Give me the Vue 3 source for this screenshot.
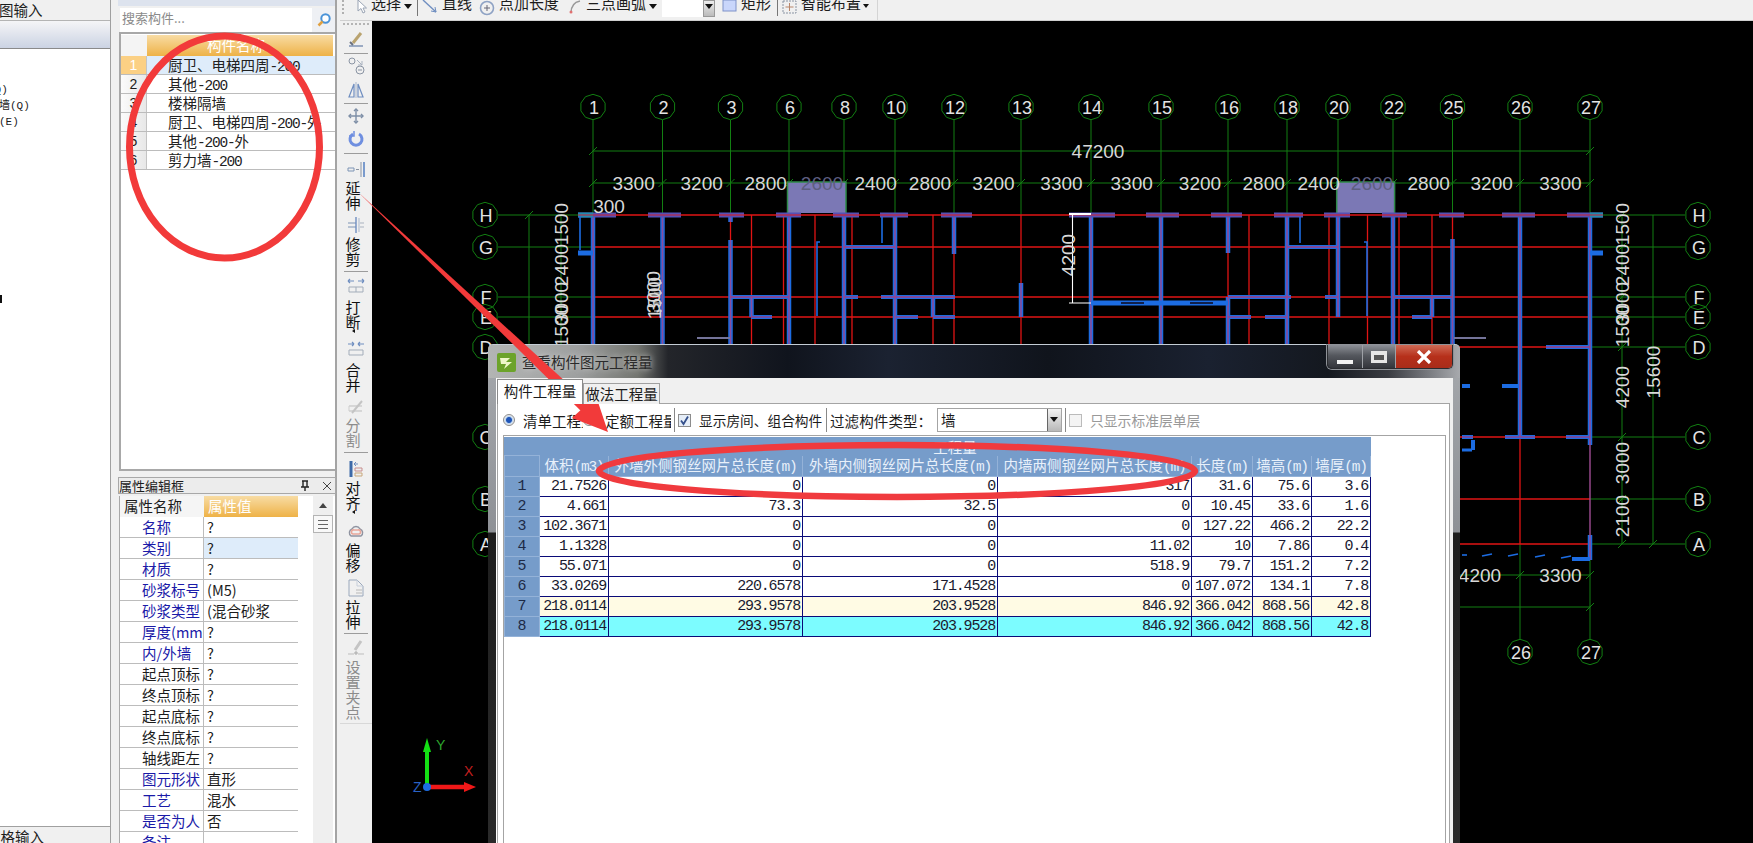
<script setup>
const navLines = [
  { t: '(Q)', cls: 'nl1' },
  { t: '砼墙(Q)', cls: 'nl2' },
  { t: '梁(E)', cls: 'nl3' }
]
const listRows = [
  ['厨卫、电梯四周', '-200'],
  ['其他', '-200'],
  ['楼梯隔墙', ''],
  ['厨卫、电梯四周', '-200-外'],
  ['其他', '-200-外'],
  ['剪力墙', '-200']
]
const props = [
  ['名称', '?', 1], ['类别', '?', 1, 1], ['材质', '?', 1], ['砂浆标号', '(M5)', 1], ['砂浆类型', '(混合砂浆', 1],
  ['厚度(mm', '?', 1], ['内/外墙', '?', 1], ['起点顶标', '?'], ['终点顶标', '?'], ['起点底标', '?'], ['终点底标', '?'],
  ['轴线距左', '?'], ['图元形状', '直形', 1], ['工艺', '混水', 1], ['是否为人', '否', 1], ['备注', '', 1]
]

const ic = {
  brush: [['M7 14 15 4', '#b9a36f', 3], ['M3 17H17', '#7f93b5', 1.5], ['M4 13l3 3', '#68707f', 2]],
  pair: [['M3 5a3 3 0 1 0 6 0a3 3 0 1 0-6 0', '#8a94a3', 1], ['M10 14a4 4 0 1 0 8 0a4 4 0 1 0-8 0', '#8a94a3', 1], ['M11 4l5 5M16 5v4h-4', '#a9b2bf', 1], ['M12 14h4', '#8a94a3', 1]],
  mirror: [['M8 17V4L3 17Z', '#6f8ec0', 1.2], ['M12 17V4L17 17Z', '#6f8ec0', 1.2], ['M10 2V18', '#a9b7cc', 1]],
  move: [['M10 3V17M3 10H17', '#7d8ea6', 1.4], ['M8 5l2-2 2 2M8 15l2 2 2-2M5 8l-2 2 2 2M15 8l2 2-2 2', '#7d8ea6', 1.4]],
  rotate: [['M7 5a6 6 0 1 0 6 0', '#6f8fe0', 3], ['M8 2v5H3', '#6f8fe0', 1.5]],
  extend: [['M2 9H8M2 12H8M2 9V12M8 9V12', '#7d94b5', 1], ['M10 10.5H13', '#8a94a3', 1], ['M15 3V18', '#8a94a3', 1], ['M18 3V18', '#5d86c4', 1.6]],
  trim: [['M2 8H10M2 12H10', '#7d94b5', 1], ['M10 2V18', '#6f8ec0', 1.4], ['M13 3V17', '#a9b7cc', 1], ['M14 8H18M14 12H18', '#a9b2bf', 1]],
  breakI: [['M2 5H8M2 5l2-2M2 5l2 2M18 5h-6M18 5l-2-2M18 5l-2 2', '#6f8ec0', 1.2], ['M3 11H17M3 16H17M3 11V16M17 11V16M10 11V16', '#a3adba', 1]],
  merge: [['M8 5H2M8 5L6 3M8 5L6 7M12 5h6M12 5l2-2M12 5l2 2', '#6f8ec0', 1.2], ['M3 11H17M3 16H17M3 11V16M17 11V16', '#a3adba', 1]],
  split: [['M3 15H16M3 10H16', '#bdbdbd', 1], ['M6 17 16 5', '#c4c4c4', 2], ['M3 10V15', '#cfcfcf', 1]],
  align: [['M5 2V18', '#3e6aa8', 3], ['M8 5H12M8 5l2-2M8 5l2 2', '#6f8ec0', 1], ['M9 9H16V12H9Z', '#c78d8d', 1], ['M9 14H16V17H9Z', '#c9a77a', 1]],
  offset: [['M5 15a4 4 0 0 1 1-7a4.500 4.500 0 0 1 8 0a4 4 0 0 1 1 7Z', '#8f93a0', 1.4], ['M7 13a2 2 0 0 1 1-4h4a2 2 0 0 1 1 4Z', '#e8a79a', 1.6]],
  stretch: [['M3 2H11L17 8V18H3Z', '#9aa8bc', 1], ['M11 2V8H17', '#c7cfdb', 1], ['M10 12H16M10 15H16', '#b8b8b8', 1]],
  grip: [['M9 12 15 3', '#c4c4c4', 3], ['M2 16H8M12 16H18', '#bdbdbd', 1], ['M9 14h2v2H9Z', '#a8a8a8', 1]]
}
const vbar = [
  { k: 'brush', mt: 3 }, { sep: 1, mt: 4 }, { k: 'pair', mt: 2 }, { k: 'mirror', mt: 4 }, { sep: 1, mt: 3 },
  { k: 'move', mt: 2 }, { k: 'rotate', mt: 3 }, { sep: 1, mt: 4 },
  { k: 'extend', mt: 5, label: '延伸', tmt: 1 }, { k: 'trim', mt: 5, label: '修剪', tmt: 1 }, { sep: 1, mt: 5 },
  { k: 'breakI', mt: 4, label: '打断', tmt: 3, more: 1 }, { k: 'merge', mt: 6, label: '合并', tmt: 3 },
  { k: 'split', mt: 4, label: '分割', tmt: 1, off: 1 }, { sep: 1, mt: 5 },
  { k: 'align', mt: 6, label: '对齐', tmt: 1, more: 1 }, { k: 'offset', mt: 7, label: '偏移', tmt: 1 },
  { k: 'stretch', mt: 6, label: '拉伸', tmt: 1 }, { sep: 1, mt: 4 },
  { k: 'grip', mt: 4, label: '设置夹点', tmt: 1, off: 1 }
]

const tableHead = [['体积', '(m3)'], ['外墙外侧钢丝网片总长度', '(m)'], ['外墙内侧钢丝网片总长度', '(m)'], ['内墙两侧钢丝网片总长度', '(m)'], ['长度', '(m)'], ['墙高', '(m)'], ['墙厚', '(m)']]
const colW = [35, 69, 194, 195, 194, 61, 59, 59]
const tableRows = [
  ['21.7526', '0', '0', '317', '31.6', '75.6', '3.6'],
  ['4.661', '73.3', '32.5', '0', '10.45', '33.6', '1.6'],
  ['102.3671', '0', '0', '0', '127.22', '466.2', '22.2'],
  ['1.1328', '0', '0', '11.02', '10', '7.86', '0.4'],
  ['55.071', '0', '0', '518.9', '79.7', '151.2', '7.2'],
  ['33.0269', '220.6578', '171.4528', '0', '107.072', '134.1', '7.8'],
  ['218.0114', '293.9578', '203.9528', '846.92', '366.042', '868.56', '42.8'],
  ['218.0114', '293.9578', '203.9528', '846.92', '366.042', '868.56', '42.8']
]

const axes = [['1', 593], ['2', 662.5], ['3', 730.5], ['6', 789], ['8', 844], ['10', 895], ['12', 954], ['13', 1021], ['14', 1091], ['15', 1161], ['16', 1228], ['18', 1287], ['20', 1338], ['22', 1393], ['25', 1452.5], ['26', 1520], ['27', 1590]]
const hAxes = [['H', 215], ['G', 247], ['F', 297], ['E', 317], ['D', 347], ['C', 437], ['B', 499], ['A', 544]]
const poly = (cx, cy, r = 12.7) => Array.from({ length: 10 }, (_, i) => {
  const a = Math.PI * 2 * i / 10 + Math.PI / 2
  return `${(cx + r * Math.cos(a)).toFixed(1)},${(cy + r * Math.sin(a)).toFixed(1)}`
}).join(' ')
const circles = [
  ...axes.map(([t, x]) => ({ t, x, y: 107, key: 't' + t })),
  ...hAxes.map(([t, y]) => ({ t, x: 485, y, key: 'l' + t })),
  ...hAxes.map(([t, y]) => ({ t, x: 1698, y, key: 'r' + t })),
  { t: '26', x: 1520, y: 652, key: 'b26' }, { t: '27', x: 1590, y: 652, key: 'b27' }
]
const dimsTop = [['3300', 633.6], ['3200', 701.7], ['2800', 765.7], ['2400', 875.6], ['2800', 930], ['3200', 993.5], ['3300', 1061.5], ['3300', 1131.7], ['3200', 1200], ['2800', 1263.7], ['2400', 1318.7], ['2800', 1428.7], ['3200', 1491.7], ['3300', 1560.4]]
const dimsV = [
  ['1500', 561, 224], ['2400', 561, 265], ['1500', 561, 326], ['3000', 561, 303],
  ['1500', 1622, 224], ['2400', 1622, 265], ['1500', 1622, 326], ['3000', 1622, 303], ['4200', 1622, 387], ['3000', 1622, 463], ['2100', 1622, 516],
  ['15600', 1653, 372], ['4200', 1068, 255], ['1500', 654, 298], ['3000', 653, 292]
]
const ticks = []
axes.forEach(([, x]) => ticks.push([x, 183]))
;[[593, 151], [1590, 151], [529, 215], [1520, 575], [1590, 575], [1590, 607], [1653, 544]].forEach(p => ticks.push(p))
hAxes.forEach(([, y]) => ticks.push([1622, y]))
const redV = [751.5, 783.5, 815, 852, 933, 954, 1021, 1228, 1249, 1329, 1367.5, 1399, 1432, 730.5, 1452.5]
const redH = [215, 247, 297, 317]
const redLow = [347, 437, 499, 544]
const vWalls = [[593, 215, 344], [662.5, 215, 344], [730.5, 240, 344], [730.5, 215, 222], [789, 215, 344], [844, 215, 344], [895, 215, 344], [954, 215, 254], [1021, 283, 317], [1091, 215, 344], [1161, 215, 344], [1228, 215, 253], [1228, 297, 344], [1287, 215, 344], [1338, 215, 317], [1393, 215, 344], [1452.5, 239, 344], [1520, 215, 437], [1590, 215, 445], [1590, 535, 560], [751.5, 297, 317], [933, 297, 317], [1432, 297, 317]]
const hWalls = [[844, 895, 247], [1287, 1338, 247], [730, 789, 297], [844, 858, 297], [881, 955, 297], [1228, 1291, 297], [1325, 1338, 297], [1393, 1452, 297], [751, 772, 317], [896, 918, 317], [933, 955, 317], [1228, 1251, 317], [1265, 1287, 317], [1412, 1432, 317], [1462, 1473, 437], [1505, 1535, 437], [1566, 1590, 437], [1546, 1590, 347]]
const stubs = [[578, 616], [648, 681], [719, 744], [776, 801], [833, 859], [880, 908], [941, 972], [1069, 1115], [1146, 1179], [1211, 1242], [1274, 1303], [1324, 1350], [1382, 1407], [1439, 1464], [1502, 1535], [1567, 1603]]
const thinBlue = ['M580 216V250', 'M817 316V242H820', 'M882 217V243', 'M1300 217V243', 'M1367 316V242H1364', 'M1462 555h5', 'M1482 556l10-2', 'M1508 556l10-2', 'M1535 557l10-2', 'M1561 558l10-2']
const thickBlue = [[578, 593, 253, 5], [1590, 1603, 253, 5], [1462, 1470, 386, 4], [1502, 1518, 386, 4], [1091, 1228, 303, 5], [1572, 1590, 559, 4], [1462, 1472, 450, 3]]
</script>

<template>
  <div class="app">
    <aside class="nav">
      <div class="nav-tab">图输入</div>
      <div class="nav-head"></div>
      <div class="nav-body">
        <div v-for="l in navLines" :key="l.t" :class="['nav-line', l.cls]">{{ l.t }}</div>
        <div class="nav-mark"></div>
      </div>
      <div class="nav-foot">表格输入</div>
    </aside>

    <section class="panel">
      <div class="panel-top"></div>
      <div class="search">
        <div class="search-input">搜索构件...</div>
        <div class="search-btn">
          <svg width="16" height="16" viewBox="0 0 16 16"><circle cx="9.5" cy="6.5" r="4.2" fill="#fff" stroke="#4a93d8" stroke-width="2"/><path d="M6.5 9.5 2.5 13.5" stroke="#e0a040" stroke-width="2.5"/></svg>
        </div>
      </div>
      <div class="list">
        <div class="list-head"><div class="lh-num"></div><div class="lh-name">构件名称</div></div>
        <div v-for="(r, i) in listRows" :key="i" :class="['list-row', { sel: i === 0 }]">
          <div class="lr-num">{{ i + 1 }}</div>
          <div class="lr-name">{{ r[0] }}<span class="mono">{{ r[1] }}</span></div>
        </div>
      </div>
      <div class="prop-title">
        <span>属性编辑框</span>
        <span class="prop-tools">
          <svg width="12" height="12" viewBox="0 0 12 12"><path d="M3 1H9M4 1V7H8V1M2 7H10M6 7V11" stroke="#222" stroke-width="1.4" fill="none"/></svg>
          <svg width="10" height="10" viewBox="0 0 10 10"><path d="M1 1 9 9M9 1 1 9" stroke="#444" stroke-width="1"/></svg>
        </span>
      </div>
      <div class="prop-wrap">
        <div class="prop-grid">
          <div class="prop-row prop-head"><div class="pn-h">属性名称</div><div class="pv-h">属性值</div></div>
          <div v-for="p in props" :key="p[0]" class="prop-row">
            <div :class="['pn', { link: p[2] }]">{{ p[0] }}</div>
            <div :class="['pv', { hi: p[3] }]">{{ p[1] }}</div>
          </div>
        </div>
        <div class="prop-scroll">
          <div class="up-arrow"></div>
          <div class="thumb"><i></i><i></i><i></i></div>
        </div>
      </div>
    </section>

    <main class="work">
      <div class="topbar">
        <span class="grip-v"></span>
        <svg class="ti" width="14" height="14" viewBox="0 0 14 14"><path d="M3 0V11L6 8.5 8 13 10 12 8 8H11.5Z" fill="#fff" stroke="#9aa4b4"/></svg>
        <span class="tb-t w-xz">选择</span><span class="caret"></span><span class="tsep"></span>
        <svg class="ti" width="16" height="14" viewBox="0 0 16 14"><path d="M1 0 14 12" stroke="#6f8ec0" stroke-width="1.4"/><path d="M14 12 9 11M14 12 13 7" stroke="#6f8ec0"/></svg>
        <span class="tb-t">直线</span>
        <svg class="ti" width="16" height="16" viewBox="0 0 16 16"><circle cx="8" cy="8" r="6.5" fill="none" stroke="#8ea2c4" stroke-width="1.6"/><path d="M8 5V11M5 8H11" stroke="#667"/></svg>
        <span class="tb-t">点加长度</span>
        <svg class="ti arc" width="12" height="14" viewBox="0 0 12 14"><path d="M2 13C2 6 6 2 11 1" fill="none" stroke="#999" stroke-width="1.4"/><circle cx="2" cy="12" r="1.5" fill="#e07070"/></svg>
        <span class="tb-t">三点画弧</span><span class="caret"></span>
        <span class="top-input"></span><span class="top-arrow"></span>
        <svg class="ti" width="15" height="14" viewBox="0 0 15 14"><rect x="1" y="0" width="13" height="11" fill="#c9d6fb" stroke="#7e92c8"/></svg>
        <span class="tb-t">矩形</span><span class="tsep sm"></span>
        <svg class="ti" width="15" height="14" viewBox="0 0 15 14"><rect x="1" y="1" width="13" height="12" fill="none" stroke="#8a94a3" stroke-dasharray="2 1"/><path d="M7.5 3V11M3.500 7H11.500" stroke="#b9866a"/></svg>
        <span class="tb-t">智能布置</span><span class="caret small"></span><span class="tend"></span>
      </div>
      <div class="work-row">
        <div class="vbar">
          <div class="vgrip"></div>
          <template v-for="(b, i) in vbar" :key="i">
            <div v-if="b.sep" class="vsep" :style="{ marginTop: b.mt + 'px' }"></div>
            <div v-else :class="['vbtn', { off: b.off }]" :style="{ marginTop: b.mt + 'px' }">
              <svg width="20" height="20" viewBox="0 0 20 20" fill="none"><path v-for="(p, j) in ic[b.k]" :key="j" :d="p[0]" :stroke="p[1]" :stroke-width="p[2]"/></svg>
              <div v-if="b.label" class="vlabel" :style="{ marginTop: b.tmt + 'px' }"><span v-for="c in b.label.split('')" :key="c">{{ c }}</span></div>
              <div v-if="b.more" class="vmore"></div>
            </div>
          </template>
          <div class="vend"></div>
        </div>
        <div class="canvas">
          <svg class="cad" width="1381" height="822" viewBox="372 21 1381 822">
            <g stroke="#127f12" stroke-width="1" fill="none">
              <path v-for="a in axes" :key="a[0]" :d="`M${a[1]} 120V215`"/>
              <path d="M593 151H1590M593 183H1590"/>
              <path v-for="h in hAxes" :key="h[0]" :d="`M1590 ${h[1]}H1685`"/>
              <path d="M498 215H593M498 247H593M498 297H593M498 317H593"/>
              <path d="M529 215V344M561 215V344M1622 215V544M1653 215V544M1460 575H1590M1460 607H1590M1520 544V639M1590 544V639"/>
              <path v-for="(t, i) in ticks" :key="i" :d="`M${t[0] - 4} ${t[1] + 4}L${t[0] + 4} ${t[1] - 4}`"/>
              <polygon v-for="c in circles" :key="c.key" :points="poly(c.x, c.y)"/>
            </g>
            <rect x="787.500" y="182" width="58.500" height="31" fill="#7b78b5"/>
            <rect x="1336.700" y="182" width="57.900" height="31" fill="#7b78b5"/>
            <path d="M787.500 213V182H846V213M1336.700 213V182H1394.600V213" stroke="#2f8a4a" stroke-width="1.500" fill="none"/>
            <g stroke="#e01414" stroke-width="1.300" fill="none">
              <path v-for="x in redV" :key="x" :d="`M${x} 215V344`"/>
              <path v-for="y in redH" :key="y" :d="`M593 ${y}H1590`"/>
              <path v-for="y in redLow" :key="y" :d="`M1454 ${y}H1590`"/>
              <path d="M1520 437V544"/>
            </g>
            <g fill="none">
              <path v-for="(w, i) in vWalls" :key="i" :d="`M${w[0]} ${w[1]}V${w[2]}`" stroke="#1c6ce2" stroke-width="4.500"/>
              <path v-for="(w, i) in hWalls" :key="i" :d="`M${w[0]} ${w[2]}H${w[1]}`" stroke="#1c6ce2" stroke-width="4"/>
              <path v-for="(w, i) in vWalls" :key="'c' + i" :d="`M${w[0]} ${w[1]}V${w[2]}`" stroke="#8a4c9c" stroke-width="1.600"/>
              <path v-for="(w, i) in hWalls" :key="'d' + i" :d="`M${w[0]} ${w[2]}H${w[1]}`" stroke="#a03c84" stroke-width="1.300"/>
              <path v-for="(s, i) in stubs" :key="'s' + i" :d="`M${s[0]} 215H${s[1]}`" stroke="#5550b4" stroke-width="5"/>
              <path d="M578 215H593M1590 215H1603" stroke="#1f8bb0" stroke-width="5"/>
              <path v-for="(s, i) in stubs" :key="'r' + i" :d="`M${s[0]} 215H${s[1]}`" stroke="#d02030" stroke-width="1.200"/>
              <path v-for="d in thinBlue" :key="d" :d="d" stroke="#1c6ce2" stroke-width="1.600"/>
              <path v-for="(w, i) in thickBlue" :key="'t' + i" :d="`M${w[0]} ${w[2]}H${w[1]}`" stroke="#1c6ce2" :stroke-width="w[3]"/>
              <path d="M1121 303H1144M1190 303H1213" stroke="#10204a" stroke-width="2"/>
              <path d="M1590 445V535" stroke="#a04c94" stroke-width="1.400"/>
              <path d="M1473 440V450" stroke="#1c6ce2" stroke-width="4"/>
              <path d="M697 338H730M1454 338H1486" stroke="#74749a" stroke-width="2"/>
              <path d="M1072.500 214V303M1069 214H1091M1069 303H1091" stroke="#fff" stroke-width="1.100"/>
              <path d="M1069 214H1091" stroke="#fff" stroke-width="2"/>
              <path d="M654 283h8M654 293h8M654 303h8M654 311h8" stroke="#e8e8e8" stroke-width="1"/>
            </g>
            <g class="dim">
              <text x="1098" y="157.500">47200</text>
              <text v-for="(d, i) in dimsTop" :key="i" :x="d[1]" y="189.500">{{ d[0] }}</text>
              <text x="822" y="189.500" class="faint">2600</text>
              <text x="1372" y="189.500" class="faint">2600</text>
              <text x="609" y="213">300</text>
              <text v-for="(d, i) in dimsV" :key="'v' + i" :transform="`translate(${d[1]} ${d[2]}) rotate(-90)`" y="7">{{ d[0] }}</text>
              <text x="1480" y="581.500">4200</text>
              <text x="1560.500" y="581.500">3300</text>
            </g>
            <g class="cir">
              <text v-for="c in circles" :key="c.key" :x="c.x + 1" :y="c.y + (c.t.length > 1 || c.y < 200 && c.x > 500 ? 6.500 : 7)">{{ c.t }}</text>
            </g>
            <g>
              <path d="M427 787V750" stroke="#14e014" stroke-width="4"/>
              <path d="M427 738 423 752H431Z" fill="#14e014"/>
              <path d="M427 787H465" stroke="#f01818" stroke-width="4.500"/>
              <path d="M476 787 464 782V792Z" fill="#f01818"/>
              <circle cx="427" cy="787" r="4" fill="#1c6ce2"/>
              <text x="436" y="750" class="ucs g">Y</text>
              <text x="464" y="776" class="ucs r">X</text>
              <text x="413" y="792" class="ucs b">Z</text>
            </g>
          </svg>
        </div>
      </div>
    </main>

    <div class="dialog">
      <div class="titlebar">
        <span class="dlg-icon">
          <svg width="19" height="19" viewBox="0 0 19 19"><rect width="19" height="19" rx="2" fill="#6ca32a"/><path d="M3 5H13L9 9H15L7 16 9 11H4Z" fill="#eef7c8"/></svg>
        </span>
        <span class="dlg-title">查看构件图元工程量</span>
        <div class="winbtns">
          <span class="wb min"><i></i></span>
          <span class="wb max"><i></i></span>
          <span class="wb close">
            <svg width="16" height="14" viewBox="0 0 16 14"><path d="M2 1 14 13M14 1 2 13" stroke="#fff" stroke-width="3.200"/></svg>
          </span>
        </div>
      </div>
      <div class="dlg-body">
        <div class="tabs">
          <div class="tab on">构件工程量</div>
          <div class="tab">做法工程量</div>
        </div>
        <div class="pane">
          <div class="filters">
            <span class="radio on"></span>
            <span class="f-t f1">清单工程量</span>
            <span class="radio"></span>
            <span class="f-t f2">定额工程量</span>
            <span class="fsep"></span>
            <span class="check on">
              <svg width="11" height="11" viewBox="0 0 11 11"><path d="M2 5.500 4.500 9 9 1.500" fill="none" stroke="#34508c" stroke-width="1.800"/></svg>
            </span>
            <span class="f-t f3">显示房间、组合构件</span>
            <span class="fsep s2"></span>
            <span class="f-t f4">过滤构件类型：</span>
            <div class="select"><span>墙</span><span class="sel-btn"></span></div>
            <span class="fsep s3"></span>
            <span class="check dis"></span>
            <span class="f-t f5">只显示标准层单层</span>
          </div>
          <div class="tbox">
            <table class="qty">
              <colgroup><col v-for="(w, i) in colW" :key="i" :width="w"></colgroup>
              <tbody>
                <tr class="h1"><th></th><th colspan="7">工程量</th></tr>
                <tr class="h2"><th></th><th v-for="h in tableHead" :key="h[0]">{{ h[0] }}<span class="mono">{{ h[1] }}</span></th></tr>
                <tr v-for="(r, i) in tableRows" :key="i" :class="{ sum: i === 6, cur: i === 7 }">
                  <th class="rn">{{ i + 1 }}</th>
                  <td v-for="(c, j) in r" :key="j">{{ c }}</td>
                </tr>
              </tbody>
            </table>
          </div>
        </div>
      </div>
    </div>

    <svg class="marks" width="1753" height="843" viewBox="0 0 1753 843">
      <ellipse cx="224.500" cy="147" rx="95" ry="111" fill="none" stroke="#f23a3a" stroke-width="7"/>
      <ellipse cx="897" cy="471" rx="298" ry="26" fill="none" stroke="#f03a3e" stroke-width="6.500"/>
      <path d="M358 192 590 404 582 412Z" fill="#f23a3a"/>
      <path d="M608 432 572 418 596 396Z" fill="#f23a3a"/>
    </svg>
  </div>
</template>

<style>
html, body { margin: 0; background: #f0f0f0; overflow: hidden; }
</style>

<style scoped>
.app { position: relative; width: 1753px; height: 843px; overflow: hidden; display: flex; background: #f0f0f0; color: #1c1c1c; font: 14.500px "Noto Sans CJK SC", "Liberation Sans", sans-serif; }
.mono { font-family: "Liberation Mono", "Noto Sans CJK SC", monospace; letter-spacing: -1.200px; }

.nav { width: 111px; flex: none; display: flex; flex-direction: column; border-right: 1px solid #a0a0a0; box-sizing: border-box; }
.nav-tab { height: 21px; line-height: 20px; border-bottom: 1px solid #b4b4b4; margin-left: -1px; font-size: 14.500px; white-space: nowrap; box-sizing: border-box; }
.nav-head { height: 27px; background: linear-gradient(#f5f5f7, #cbd3e3); border-bottom: 1px solid #8a8a8a; }
.nav-body { flex: 1; background: #fff; display: flex; flex-direction: column; overflow: hidden; font-size: 11px; position: relative; }
.nav-line { white-space: nowrap; height: 16px; line-height: 16px; font-family: "Liberation Mono", "Noto Sans CJK SC", monospace; }
.nl1 { margin-top: 33px; margin-left: -12px; width: 20px; }
.nl2 { margin-left: -12px; }
.nl3 { margin-left: -12px; }
.nav-mark { width: 2px; height: 8px; background: #111; margin-top: 165px; }
.nav-foot { height: 16px; line-height: 20px; border-top: 1px solid #a0a0a0; margin-left: -14px; white-space: nowrap; overflow: hidden; font-size: 14.500px; }

.panel { width: 219px; margin-left: 7px; flex: none; display: flex; flex-direction: column; border-right: 2px solid #a4a4a4; box-sizing: border-box; }
.panel-top { height: 6px; background: #dde3ee; }
.search { height: 24px; margin-top: 2px; display: flex; }
.search-input { width: 192px; margin-left: 2px; background: #fff; color: #8a8a8a; font-size: 13px; line-height: 20px; padding-left: 2px; box-sizing: border-box; }
.search-btn { flex: 1; display: flex; align-items: center; justify-content: center; background: #eef0f4; }
.list { height: 439px; background: #fff; border: 2px solid #a8a8a8; border-right: 0; border-bottom-width: 2px; margin-left: 1px; box-sizing: border-box; }
.list-head { display: flex; height: 21px; margin-top: 1px; }
.lh-num { width: 26px; background: #f4f4f4; }
.lh-name { flex: 1; text-align: center; color: #fff; line-height: 20px; background: linear-gradient(#f8dca4, #eeb247); margin-right: 2px; padding-right: 8px; }
.list-row { display: flex; height: 19px; line-height: 18px; border-bottom: 1px solid #bcbcbc; box-sizing: border-box; }
.lr-num { width: 26px; text-align: center; background: linear-gradient(90deg, #fbfbfb, #e8e8e8); border-right: 1px solid #c4c4c4; box-sizing: border-box; font-family: "Liberation Sans", sans-serif; font-size: 14px; }
.lr-name { flex: 1; padding-left: 21px; white-space: nowrap; overflow: hidden; color: #222; }
.list-row.sel { background: #deecfa; }
.list-row.sel .lr-num { background: #fbd084; color: #fff; }
.prop-title { height: 15px; margin-top: 6px; line-height: 14px; background: #ececec; border: 1px solid #a8a8a8; font-size: 13px; display: flex; justify-content: space-between; align-items: center; box-sizing: content-box; margin-right: -1px; }
.prop-tools { display: flex; gap: 11px; padding-right: 3px; align-items: center; }
.prop-wrap { flex: 1; margin-top: 2px; display: flex; background: #fff; border-left: 1px solid #a8a8a8; min-height: 0; overflow: hidden; margin-left: 1px; }
.prop-grid { width: 178px; flex: none; }
.prop-row { display: grid; grid-template-columns: 84px 94px; height: 21px; line-height: 20px; border-bottom: 1px solid #bcbcbc; box-sizing: border-box; }
.prop-head { height: 21px; border-bottom: 0; }
.pn-h { padding-left: 4px; background: #f5f5f5; font-size: 14.500px; }
.pv-h { background: linear-gradient(#f8dca4, #eeb247); color: #fff; padding-left: 4px; }
.pn { padding-left: 22px; white-space: nowrap; overflow: hidden; border-right: 1px solid #bcbcbc; box-sizing: border-box; }
.pn.link { color: #1a1aa8; }
.pv { padding-left: 3px; white-space: nowrap; overflow: hidden; }
.pv.hi { background: #deecfa; }
.prop-scroll { width: 20px; margin-left: 15px; background: #efefef; position: relative; }
.up-arrow { width: 0; height: 0; margin: 7px auto 0; border: 4px solid transparent; border-bottom: 5px solid #444; border-top: 0; }
.thumb { margin-top: 7px; height: 18px; border: 1px solid #b4b4b4; background: #f8f8f8; display: flex; flex-direction: column; gap: 3px; align-items: center; justify-content: center; box-sizing: border-box; }
.thumb i { display: block; width: 10px; height: 1px; background: #666; }

.work { flex: 1; min-width: 0; display: flex; flex-direction: column; margin-left: 3px; }
.topbar { height: 21px; flex: none; display: flex; align-items: flex-end; padding-bottom: 8px; box-sizing: border-box; background: #f0f0f0; border-bottom: 1px solid #cfcfcf; overflow: hidden; white-space: nowrap; padding-left: 2px; }
.grip-v { width: 2px; height: 14px; margin-right: 11px; border-left: 2px dotted #b0b0b0; align-self: flex-start; box-sizing: border-box; }
.ti { flex: none; align-self: flex-start; margin-top: 0; }
.tb-t { margin-left: 4px; line-height: 18px; font-size: 15px; height: 18px; flex: none; }
.w-xz { margin-left: 2px; }
.caret { width: 0; height: 0; margin-left: 3px; align-self: flex-start; margin-top: 4px; border: 4px solid transparent; border-top: 5px solid #111; border-bottom: 0; flex: none; }
.caret.small { border-width: 3px; border-top-width: 4px; margin-left: 2px; }
.tsep { width: 1px; height: 16px; background: #777; margin: 0 4px 0 5px; align-self: flex-start; flex: none; }
.tsep.sm { margin: 0 4px 0 6px; }
.tb-t + .ti, .caret + .ti { margin-left: 7px; }
.arc { margin-left: 10px !important; margin-right: 1px; }
.top-input { width: 41px; height: 17px; background: #fff; margin-left: 5px; align-self: flex-start; flex: none; }
.top-arrow { width: 12px; height: 17px; margin-right: 7px; align-self: flex-start; background: linear-gradient(#eee, #bbb); border: 1px solid #999; box-sizing: border-box; position: relative; flex: none; }
.top-arrow::after { content: ""; position: absolute; left: 1px; top: 3px; border: 4px solid transparent; border-top: 5px solid #111; border-bottom: 0; }
.tend { width: 1px; height: 21px; background: #d4d4d4; margin-left: 8px; flex: none; align-self: flex-start; }

.work-row { flex: 1; display: flex; min-height: 0; }
.vbar { width: 32px; flex: none; display: flex; flex-direction: column; align-items: center; background: #f0f0f0; }
.vgrip { width: 26px; height: 3px; margin-top: 2px; border-top: 2px dotted #b4b4b4; box-sizing: border-box; }
.vsep { width: 24px; height: 1px; background: #9c9c9c; flex: none; }
.vbtn { display: flex; flex-direction: column; align-items: center; flex: none; width: 100%; }
.vbtn svg { display: block; flex: none; }
.vlabel { display: flex; flex-direction: column; font-size: 15px; line-height: 15px; padding-right: 6px; color: #111; }
.vbtn.off .vlabel { color: #8c8c8c; }
.vmore { width: 0; height: 0; border: 2.500px solid transparent; border-right: 3px solid #111; border-left: 0; margin-right: 6px; }
.vend { width: 100%; height: 1px; background: #d8d8d8; margin-top: 4px; }

.canvas { flex: 1; min-width: 0; background: #000; overflow: hidden; }
.cad { display: block; }
.dim text { font: 19px "Liberation Sans", sans-serif; fill: #d8d8d8; text-anchor: middle; }
.dim text.faint { fill: #5e5e80; }
.cir text { font: 18px "Liberation Sans", sans-serif; fill: #e4e4e4; text-anchor: middle; }
.ucs { font: 14px "Liberation Sans", sans-serif; }
.ucs.g { fill: #2ea82e; }
.ucs.r { fill: #c21f1f; }
.ucs.b { fill: #2a62c4; }

.dialog { position: absolute; left: 488px; top: 344px; width: 972px; height: 499px; box-sizing: border-box; padding: 0 7px 0 8px; display: flex; flex-direction: column; border-top: 1px solid #c4ccd4; border-radius: 5px 5px 0 0; background: linear-gradient(#a6a9ad 0, #8e9196 187px, #1e1e1e 188px, #2a2a2a 100%); }
.titlebar { height: 33px; flex: none; margin: 0 -7px 0 -8px; padding-left: 9px; display: flex; position: relative; border-radius: 5px 5px 0 0; background: linear-gradient(90deg, #b3b5b4 0, #9d9f9f 90px, #72746f 150px, #23252a 180px, #10141d 300px, #1b2231 400px, #10141c 560px, #1a2130 720px, #14181f 840px, #3a3c42 900px, #a8aaae 972px); }
.dlg-icon { margin-top: 8px; display: block; height: 19px; }
.dlg-title { margin: 6px 0 0 6px; color: #2a2a2a; font-size: 14.500px; line-height: 21px; text-shadow: 0 0 6px #ddd; }
.winbtns { position: absolute; right: 7px; top: 0; display: flex; height: 24px; width: 126px; border: 1px solid #2a2c30; border-top: 0; border-radius: 0 0 5px 5px; overflow: hidden; box-sizing: border-box; box-shadow: 0 0 0 1px #8f9298; }
.wb { display: flex; align-items: center; justify-content: center; height: 100%; box-sizing: border-box; }
.wb.min { width: 35px; background: linear-gradient(#8d9097, #55585e 45%, #33353b); border-right: 1px solid #9ea1a6; align-items: flex-end; padding-bottom: 4px; }
.wb.min i { width: 16px; height: 4px; background: #f2f2f2; }
.wb.max { width: 33px; background: linear-gradient(#8d9097, #55585e 45%, #33353b); border-right: 1px solid #9ea1a6; }
.wb.max i { width: 16px; height: 12px; border: 3px solid #e6e6e6; border-top-width: 4px; box-sizing: border-box; background: #555; }
.wb.close { flex: 1; background: linear-gradient(#cf6a55, #b6301b 50%, #a82c1a); }
.dlg-body { flex: 1; min-height: 0; background: #f0f0f0; display: flex; flex-direction: column; border-left: 1px solid #fff; }
.tabs { height: 26px; flex: none; display: flex; align-items: flex-end; position: relative; z-index: 1; margin-bottom: -1px; }
.tab { width: 77px; height: 21px; line-height: 20px; border: 1px solid #a0a0a0; border-bottom: 0; text-align: center; box-sizing: border-box; background: #f0f0f0; flex: none; }
.tab.on { width: 86px; height: 25px; line-height: 22px; background: #fff; border-color: #8a8a8a; }
.pane { flex: 1; min-height: 0; background: #fff; border: 1px solid #a4a4a4; border-bottom: 0; margin-right: 3px; display: flex; flex-direction: column; }
.filters { height: 31px; flex: none; display: flex; align-items: center; box-sizing: border-box; padding-left: 5px; padding-top: 1px; white-space: nowrap; }
.radio { width: 12px; height: 12px; border-radius: 50%; border: 1px solid #8c8c8c; flex: none; box-sizing: border-box; background: #eee; }
.radio.on { background: radial-gradient(circle, #1f55b8 0 2.500px, #bcd4ee 3.500px, #eee 5px); }
.f-t { flex: none; overflow: hidden; display: block; }
.f1 { width: 60px; margin: 0 0 0 8px; }
.f2 { width: 66px; margin-left: 10px; }
.fsep { width: 1px; height: 24px; background: #888; margin: 0 3px 0 3px; flex: none; }
.check { width: 13px; height: 13px; border: 1px solid #8c8c8c; box-sizing: border-box; background: #e6eef8; display: flex; align-items: center; justify-content: center; flex: none; }
.check.dis { background: #f4f4f4; border-color: #bbb; }
.f3 { width: 123px; margin-left: 8px; font-size: 13.700px; }
.s2 { margin: 0 3px 0 4px; }
.f4 { width: 107px; letter-spacing: .1px; }
.select { width: 125px; height: 24px; border: 1px solid #a4a4a4; box-sizing: border-box; display: flex; justify-content: space-between; padding-left: 3px; line-height: 22px; flex: none; }
.sel-btn { width: 13px; background: linear-gradient(#f4f4f4, #b8b8b8); border-left: 1px solid #666; position: relative; }
.sel-btn::after { content: ""; position: absolute; left: 2px; top: 8px; border: 4px solid transparent; border-top: 5px solid #111; border-bottom: 0; }
.s3 { margin: 0 3px; }
.f5 { margin-left: 8px; color: #999; font-size: 13.800px; }
.tbox { flex: 1; min-height: 0; margin: 0 3px 0 5px; border: 1px solid #a4a4a4; border-bottom: 0; padding: 1px 0 0 0; overflow: hidden; }
.qty { border-collapse: collapse; table-layout: fixed; width: 865px; color: #1a1a30; }
.qty th { background: #769cca; color: #e8f0fa; font-weight: 400; padding: 0; overflow: hidden; white-space: nowrap; border: 1px solid #94b2d8; text-align: center; }
.h1 th { height: 17px; line-height: 17px; border-color: #769cca; }
.h1 th:first-child { border-bottom-color: #94b2d8; }
.h2 th { height: 18px; line-height: 18px; }
.qty tr:not(.h1):not(.h2) .rn { height: 19px; color: #1d2a46; font: 15px/18px "Liberation Mono", monospace; }
.qty td { height: 19px; padding: 0 2px 0 0; text-align: right; background: #fff; border: 1px solid #0a0a78; font: 15px/18px "Liberation Mono", monospace; letter-spacing: -1.150px; white-space: nowrap; overflow: hidden; }
.sum td { background: #fffbe4; }
.cur td { background: #7cfcff; }

.marks { position: absolute; left: 0; top: 0; pointer-events: none; }
</style>
